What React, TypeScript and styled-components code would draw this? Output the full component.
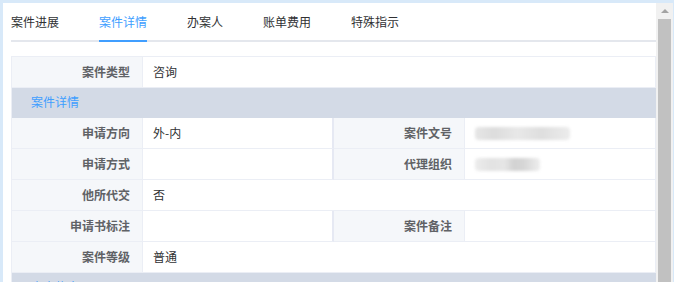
import React from "react";
import styled, { createGlobalStyle } from "styled-components";

const Global = createGlobalStyle`
  html, body { margin: 0; padding: 0; background: #d8e9f9; overflow: hidden; }
  body { font-family: "Noto Sans CJK SC", "Microsoft YaHei", sans-serif; font-size: 12px; }
  * { box-sizing: border-box; }
`;

const Frame = styled.div`
  display: flex;
  height: 282px;
  padding: 3px 1px 0 3px;
`;

const Panel = styled.div`
  flex: 1;
  display: flex;
  background: #fff;
  min-width: 0;
`;

const Content = styled.div`
  flex: 1;
  min-width: 0;
  padding-left: 8px;
  overflow: hidden;
`;

const ScrollBar = styled.div`
  width: 17px;
  background: #f1f1f1;
  display: flex;
  flex-direction: column;
`;

const ScrollArrow = styled.div`
  height: 16px;
  display: flex;
  align-items: center;
  justify-content: center;
  &::before {
    content: "";
    width: 0;
    height: 0;
    border-left: 4px solid transparent;
    border-right: 4px solid transparent;
    border-bottom: 4px solid #a3a3a3;
    margin-top: 0px;
  }
`;

const ScrollThumb = styled.div`
  flex: 1;
  margin: 0 2px;
  background: #c1c1c1;
`;

const TabNav = styled.div`
  display: flex;
  height: 39px;
  border-bottom: 2px solid #e4e7ed;
`;

const Tab = styled.div<{ $active?: boolean }>`
  position: relative;
  padding: 0 20px;
  line-height: 37px;
  font-size: 12px;
  color: ${(p) => (p.$active ? "#409eff" : "#303133")};
  white-space: nowrap;
  &:first-child { padding-left: 0; }
  ${(p) =>
    p.$active &&
    `&::after {
      content: "";
      position: absolute;
      left: 20px;
      right: 20px;
      bottom: -2px;
      height: 2px;
      background: #409eff;
    }`}
`;

const Table = styled.div`
  margin-top: 14px;
  border-top: 1px solid #ebeef5;
  border-left: 1px solid #ebeef5;
`;

const Row = styled.div<{ $pairs: number }>`
  display: grid;
  grid-template-columns: ${(p) => (p.$pairs === 2 ? "131px 191px 131px 1fr" : "131px 1fr")};
  height: 31px;
`;

const Label = styled.div`
  background: #f5f7fa;
  color: #606266;
  font-weight: 600;
  text-align: right;
  padding-right: 12px;
  line-height: 30px;
  border-right: 1px solid #ebeef5;
  border-bottom: 1px solid #ebeef5;
  white-space: nowrap;
`;

const Value = styled.div<{ $split?: boolean }>`
  color: #303133;
  padding-left: 10px;
  line-height: 30px;
  border-right: ${(p) => (p.$split ? "2px solid #e6e9f3" : "1px solid #ebeef5")};
  border-bottom: 1px solid #ebeef5;
  display: flex;
  align-items: center;
  white-space: nowrap;
`;

const Section = styled.div`
  height: 30px;
  line-height: 28px;
  background: #d3dae6;
  color: #409eff;
  padding-left: 19px;
`;

const Blur = styled.span<{ $w: number; $bg: string }>`
  display: inline-block;
  width: ${(p) => p.$w}px;
  height: 13px;
  background: ${(p) => p.$bg};
  filter: blur(1.5px);
  border-radius: 4px;
`;

type Cell = { label: string; value?: React.ReactNode };

const Pair = ({ cells }: { cells: Cell[] }) => (
  <Row $pairs={cells.length}>
    {cells.map((c, i) => (
      <React.Fragment key={i}>
        <Label>{c.label}</Label>
        <Value $split={cells.length === 2 && i === 0}>{c.value}</Value>
      </React.Fragment>
    ))}
  </Row>
);

export default function App() {
  const tabs = ["案件进展", "案件详情", "办案人", "账单费用", "特殊指示"];
  return (
    <>
      <Global />
      <Frame>
        <Panel>
          <Content>
            <TabNav>
              {tabs.map((t, i) => (
                <Tab key={t} $active={i === 1}>
                  {t}
                </Tab>
              ))}
            </TabNav>
            <Table>
              <Pair cells={[{ label: "案件类型", value: "咨询" }]} />
              <Section>案件详情</Section>
              <Pair
                cells={[
                  { label: "申请方向", value: "外-内" },
                  {
                    label: "案件文号",
                    value: (
                      <Blur
                        $w={95}
                        $bg="linear-gradient(90deg,#e6e6e6 0%,#dcdcdc 20%,#e8e8e8 45%,#dedede 70%,#ececec 100%)"
                      />
                    ),
                  },
                ]}
              />
              <Pair
                cells={[
                  { label: "申请方式" },
                  {
                    label: "代理组织",
                    value: (
                      <Blur
                        $w={65}
                        $bg="linear-gradient(90deg,#ececec 0%,#e2e2e2 25%,#e6e6e6 45%,#d2d2d2 60%,#d6d6d6 75%,#eeeeee 100%)"
                      />
                    ),
                  },
                ]}
              />
              <Pair cells={[{ label: "他所代交", value: "否" }]} />
              <Pair cells={[{ label: "申请书标注" }, { label: "案件备注" }]} />
              <Pair cells={[{ label: "案件等级", value: "普通" }]} />
              <Section>客户信息</Section>
            </Table>
          </Content>
          <ScrollBar>
            <ScrollArrow />
            <ScrollThumb />
          </ScrollBar>
        </Panel>
      </Frame>
    </>
  );
}
